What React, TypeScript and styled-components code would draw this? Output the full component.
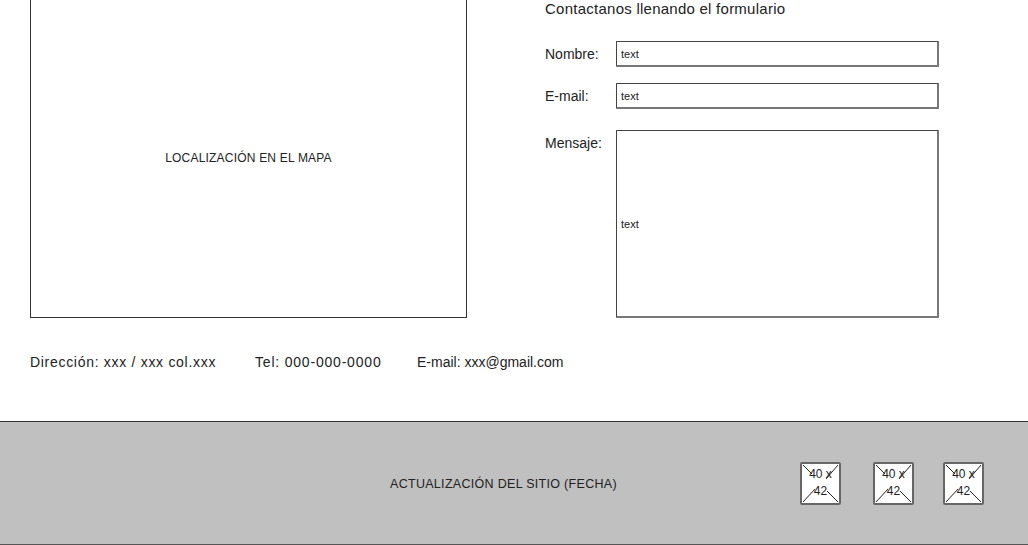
import React from "react";
import styled, { createGlobalStyle } from "styled-components";

const Global = createGlobalStyle`
  html, body { margin: 0; padding: 0; background: #fff; }
  body { font-family: "Liberation Sans", Arial, sans-serif; color: #222; }
`;

const Page = styled.div`
  width: 1028px;
  height: 545px;
  display: flex;
  flex-direction: column;
  overflow: hidden;
`;

const Top = styled.div`
  display: flex;
  padding-left: 30px;
  gap: 78px;
`;

const MapBox = styled.div`
  width: 437px;
  height: 318px;
  box-sizing: border-box;
  border: 1px solid #333;
  border-top: none;
  display: flex;
  align-items: center;
  justify-content: center;
  padding-bottom: 2px;
  font-size: 12px;
  color: #222;
  letter-spacing: 0.2px;
`;

const Form = styled.div`
  display: flex;
  flex-direction: column;
`;

const Heading = styled.div`
  font-size: 15px;
  line-height: 18px;
  color: #222;
  letter-spacing: 0.25px;
`;

const Row = styled.div<{ $mt: number; $top?: boolean }>`
  display: flex;
  align-items: ${(p) => (p.$top ? "flex-start" : "center")};
  margin-top: ${(p) => p.$mt}px;
`;

const Label = styled.div<{ $pt?: number }>`
  width: 71px;
  font-size: 14px;
  color: #222;
  padding-top: ${(p) => p.$pt ?? 0}px;
`;

const Field = styled.div<{ $h: number }>`
  width: 323px;
  height: ${(p) => p.$h}px;
  border: 1px solid #444;
  border-right: 2px solid #777;
  border-bottom: 2px solid #777;
  border-radius: 1px;
  background: #fff;
  display: flex;
  align-items: center;
  padding-left: 4px;
  box-sizing: border-box;
  font-size: 11px;
  color: #222;
`;

const Contact = styled.div`
  display: flex;
  padding-left: 30px;
  margin-top: 35px;
  font-size: 14px;
  line-height: 18px;
  color: #222;
`;

const ContactItem = styled.span<{ $w: number; $ls?: number }>`
  width: ${(p) => p.$w}px;
  white-space: nowrap;
  letter-spacing: ${(p) => p.$ls ?? 0}px;
`;

const Footer = styled.div`
  margin-top: 50px;
  height: 124px;
  box-sizing: border-box;
  background: #c0c0c0;
  border-top: 1px solid #333;
  border-bottom: 1px solid #555;
  display: flex;
  align-items: center;
  padding-right: 44px;
`;

const FooterText = styled.div`
  margin-left: 390px;
  margin-top: 2px;
  font-size: 12.5px;
  letter-spacing: 0.3px;
  color: #222;
`;

const Icons = styled.div`
  margin-left: auto;
  display: flex;
`;

const Placeholder = styled.div<{ $ml?: number }>`
  position: relative;
  width: 41px;
  height: 43px;
  margin-left: ${(p) => p.$ml ?? 0}px;
  box-sizing: border-box;
  background: #fff;
  border: 2px solid #666;
  border-radius: 2px;
  display: flex;
  flex-direction: column;
  align-items: center;
  justify-content: center;
  font-size: 12px;
  line-height: 17px;
  color: #222;
`;

const Cross = styled.svg`
  position: absolute;
  inset: 0;
  width: 100%;
  height: 100%;
`;

const PText = styled.span`
  position: relative;
`;

const ImagePlaceholder = ({ ml }: { ml?: number }) => (
  <Placeholder $ml={ml}>
    <Cross viewBox="0 0 37 39" preserveAspectRatio="none">
      <line x1="1" y1="1" x2="10" y2="10" stroke="#222" strokeWidth="1" />
      <line x1="36" y1="1" x2="24" y2="15" stroke="#222" strokeWidth="1" />
      <line x1="1" y1="38" x2="13" y2="25" stroke="#222" strokeWidth="1" />
      <line x1="36" y1="38" x2="25" y2="27" stroke="#222" strokeWidth="1" />
    </Cross>
    <PText>40 x</PText>
    <PText>42</PText>
  </Placeholder>
);

export default function App() {
  return (
    <Page>
      <Global />
      <Top>
        <MapBox>LOCALIZACIÓN EN EL MAPA</MapBox>
        <Form>
          <Heading>Contactanos llenando el formulario</Heading>
          <Row $mt={23}>
            <Label>Nombre:</Label>
            <Field $h={26}>text</Field>
          </Row>
          <Row $mt={16}>
            <Label>E-mail:</Label>
            <Field $h={26}>text</Field>
          </Row>
          <Row $mt={21} $top>
            <Label $pt={5}>Mensaje:</Label>
            <Field $h={188}>text</Field>
          </Row>
        </Form>
      </Top>
      <Contact>
        <ContactItem $w={225} $ls={0.7}>Dirección: xxx / xxx col.xxx</ContactItem>
        <ContactItem $w={162} $ls={0.8}>Tel: 000-000-0000</ContactItem>
        <ContactItem $w={160}>E-mail: xxx@gmail.com</ContactItem>
      </Contact>
      <Footer>
        <FooterText>ACTUALIZACIÓN DEL SITIO (FECHA)</FooterText>
        <Icons>
          <ImagePlaceholder />
          <ImagePlaceholder ml={32} />
          <ImagePlaceholder ml={29} />
        </Icons>
      </Footer>
    </Page>
  );
}
